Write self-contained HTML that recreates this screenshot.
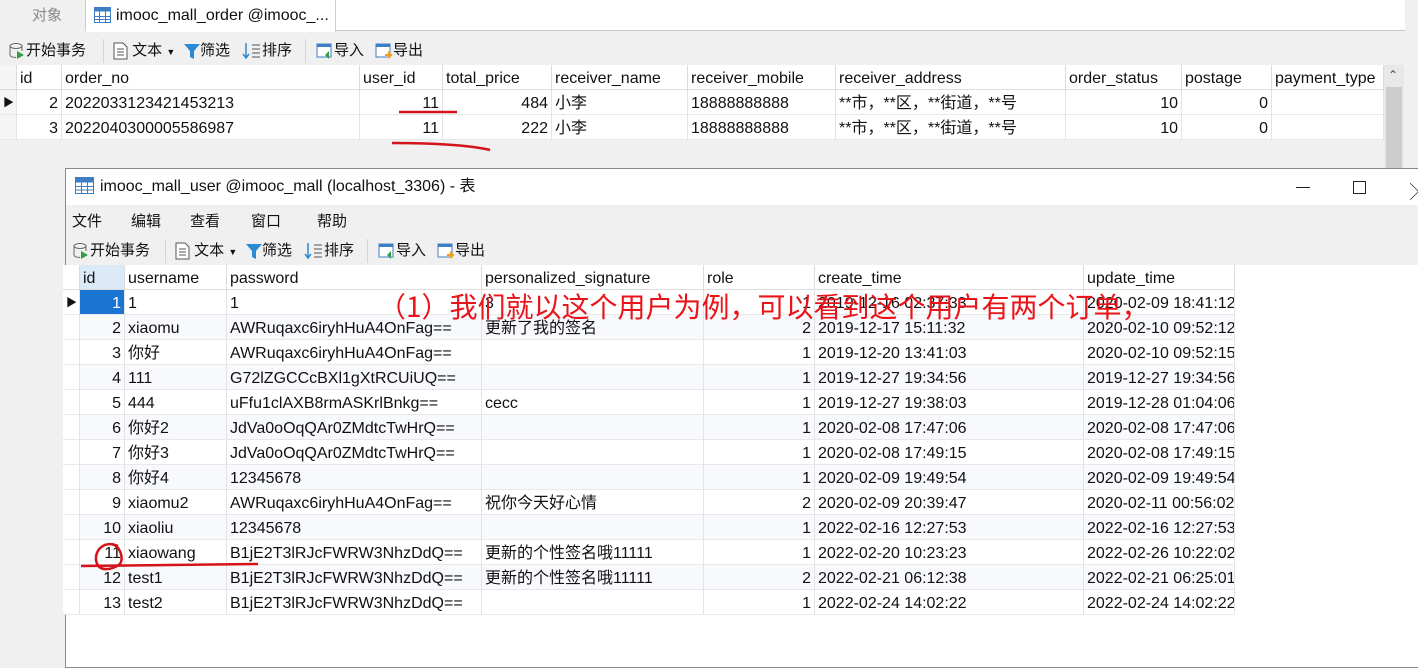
<!DOCTYPE html>
<html><head><meta charset="utf-8"><style>
*{margin:0;padding:0;box-sizing:border-box}
body{width:1418px;height:659px;position:relative;overflow:hidden;background:#f0f0f0;font-family:"Liberation Sans","Noto Sans CJK SC",sans-serif;font-size:15px;color:#111}
.a{position:absolute;white-space:nowrap}
.cell{position:absolute;height:25px;line-height:27px;padding:0 3px;overflow:hidden;white-space:nowrap;border-right:1px solid #e3e3e3;border-bottom:1px solid #e8e8e8;font-size:16px}
.r{text-align:right}
.hd{background:#fff;border-right:1px solid #ddd;border-bottom:1px solid #ddd}
.ic{display:inline-block;vertical-align:middle}
</style></head><body>
<div class="a" style="left:0;top:0;width:1405px;height:31px;background:#fff;border-bottom:1px solid #c8c8c8"></div>
<div class="a" style="left:0;top:0;width:86px;height:31px;background:#f0f0f0;border-right:1px solid #ccc;color:#888;line-height:31px;padding-left:32px">对象</div>
<div class="a" style="left:86px;top:0;width:250px;height:32px;background:#fff;border-right:1px solid #ccc;line-height:31px;padding-left:30px;font-size:16px">imooc_mall_order @imooc_...</div>
<svg class="a" style="left:94px;top:7px" width="17" height="16"><rect x="0.5" y="0.5" width="16" height="15" fill="#fff" stroke="#3c7fc4"/><rect x="0.5" y="0.5" width="16" height="4" fill="#3c7fc4"/><path d="M0 9.5H17M0 12.5H17M5.5 4V16M11.5 4V16" stroke="#3c7fc4"/></svg>
<div class="a" style="left:1405px;top:0;width:13px;height:170px;background:#f0f0f0"></div>
<div class="a" style="left:8px;top:40px;line-height:22px;font-size:15px">
<svg class="ic" width="18" height="18"><ellipse cx="8" cy="4" rx="6" ry="2.5" fill="none" stroke="#666"/><path d="M2 4v9c0 1.5 3 2.5 6 2.5M14 4v5" stroke="#666" fill="none"/><path d="M9 9l7 4-7 4z" fill="#2ea043"/></svg>开始事务</div>
<div class="a" style="left:103px;top:39px;width:1px;height:24px;background:#d5d5d5"></div>
<div class="a" style="left:113px;top:40px;line-height:22px">
<svg class="ic" width="15" height="18"><path d="M1 1h9l4 4v12H1z" fill="#fff" stroke="#555"/><path d="M4 7h7M4 10h7M4 13h7" stroke="#555"/></svg> 文本 <span style="font-size:9px">▼</span></div>
<div class="a" style="left:184px;top:40px;line-height:22px"><svg class="ic" width="16" height="18"><path d="M0 2h16l-6 7v8l-4-2V9z" fill="#2a8ad4"/></svg>筛选</div>
<div class="a" style="left:242px;top:40px;line-height:22px"><svg class="ic" width="20" height="18"><path d="M4 1v15M1 12l3 4 3-4" stroke="#2a8ad4" fill="none" stroke-width="1.5"/><path d="M10 3h8M10 7h8M10 11h8M10 15h8" stroke="#555"/></svg>排序</div>
<div class="a" style="left:305px;top:39px;width:1px;height:24px;background:#d5d5d5"></div>
<div class="a" style="left:316px;top:40px;line-height:22px"><svg class="ic" width="18" height="18"><rect x="1" y="2" width="14" height="13" fill="#fff" stroke="#3c7fc4"/><rect x="1" y="2" width="14" height="3" fill="#3c7fc4"/><path d="M9 13l4-4v8z" fill="#2ea043"/></svg>导入</div>
<div class="a" style="left:375px;top:40px;line-height:22px"><svg class="ic" width="18" height="18"><rect x="1" y="2" width="14" height="13" fill="#fff" stroke="#3c7fc4"/><rect x="1" y="2" width="14" height="3" fill="#3c7fc4"/><path d="M10 13h6M13 10l3 3-3 3" stroke="#f29b1d" fill="none" stroke-width="2"/></svg>导出</div>
<div class="a" style="left:0;top:65px;width:1384px;height:103px;background:#f0f0f0"></div>
<div class="a" style="left:1384px;top:65px;width:20px;height:103px;background:#e8e8e8"></div>
<div class="a" style="left:1386px;top:87px;width:16px;height:81px;background:#cdcdcd"></div>
<div class="a" style="left:1388px;top:68px;font-size:12px;color:#444">⌃</div>
<div id="g1"></div>
<div class="a" style="left:65px;top:168px;width:1360px;height:500px;background:#fff;border:1px solid #888"></div>
<svg class="a" style="left:75px;top:177px" width="19" height="17"><rect x="0.5" y="0.5" width="18" height="16" fill="#fff" stroke="#3c7fc4"/><rect x="0.5" y="0.5" width="18" height="5" fill="#3c7fc4"/><path d="M0 9.5H19M0 13H19M6.5 5V17M12.5 5V17" stroke="#3c7fc4"/></svg>
<div class="a" style="left:100px;top:176px;font-size:16px;line-height:22px">imooc_mall_user @imooc_mall (localhost_3306) - 表</div>
<div class="a" style="left:1296px;top:187px;width:14px;height:1px;background:#222"></div>
<div class="a" style="left:1353px;top:181px;width:13px;height:13px;border:1px solid #222"></div>
<div class="a" style="left:1410px;top:178px;font-size:17px;color:#222">╳</div>
<div class="a" style="left:66px;top:205px;width:1352px;height:60px;background:#f0f0f0"></div>
<div class="a" style="left:72px;top:211px;line-height:22px">文件</div>
<div class="a" style="left:131px;top:211px;line-height:22px">编辑</div>
<div class="a" style="left:190px;top:211px;line-height:22px">查看</div>
<div class="a" style="left:251px;top:211px;line-height:22px">窗口</div>
<div class="a" style="left:317px;top:211px;line-height:22px">帮助</div>
<div class="a" style="left:72px;top:240px;line-height:22px"><svg class="ic" width="18" height="18"><ellipse cx="8" cy="4" rx="6" ry="2.5" fill="none" stroke="#666"/><path d="M2 4v9c0 1.5 3 2.5 6 2.5M14 4v5" stroke="#666" fill="none"/><path d="M9 9l7 4-7 4z" fill="#2ea043"/></svg>开始事务</div>
<div class="a" style="left:165px;top:239px;width:1px;height:24px;background:#d5d5d5"></div>
<div class="a" style="left:175px;top:240px;line-height:22px"><svg class="ic" width="15" height="18"><path d="M1 1h9l4 4v12H1z" fill="#fff" stroke="#555"/><path d="M4 7h7M4 10h7M4 13h7" stroke="#555"/></svg> 文本 <span style="font-size:9px">▼</span></div>
<div class="a" style="left:246px;top:240px;line-height:22px"><svg class="ic" width="16" height="18"><path d="M0 2h16l-6 7v8l-4-2V9z" fill="#2a8ad4"/></svg>筛选</div>
<div class="a" style="left:304px;top:240px;line-height:22px"><svg class="ic" width="20" height="18"><path d="M4 1v15M1 12l3 4 3-4" stroke="#2a8ad4" fill="none" stroke-width="1.5"/><path d="M10 3h8M10 7h8M10 11h8M10 15h8" stroke="#555"/></svg>排序</div>
<div class="a" style="left:367px;top:239px;width:1px;height:24px;background:#d5d5d5"></div>
<div class="a" style="left:378px;top:240px;line-height:22px"><svg class="ic" width="18" height="18"><rect x="1" y="2" width="14" height="13" fill="#fff" stroke="#3c7fc4"/><rect x="1" y="2" width="14" height="3" fill="#3c7fc4"/><path d="M9 13l4-4v8z" fill="#2ea043"/></svg>导入</div>
<div class="a" style="left:437px;top:240px;line-height:22px"><svg class="ic" width="18" height="18"><rect x="1" y="2" width="14" height="13" fill="#fff" stroke="#3c7fc4"/><rect x="1" y="2" width="14" height="3" fill="#3c7fc4"/><path d="M10 13h6M13 10l3 3-3 3" stroke="#f29b1d" fill="none" stroke-width="2"/></svg>导出</div>
<div id="g2"></div>
<div class="a" style="left:378px;top:288px;font-size:28px;line-height:36px;color:#e8141a;font-family:'Noto Sans CJK SC',sans-serif">（1）我们就以这个用户为例，可以看到这个用户有两个订单，</div>
<svg class="a" style="left:0;top:0" width="1418" height="659">
<path d="M399 112L457 112" stroke="#d4141a" stroke-width="2.5" fill="none"/>
<path d="M392 143C430 143 470 145 490 150" stroke="#d4141a" stroke-width="2.5" fill="none"/>
<path d="M81 566L258 564" stroke="#d4141a" stroke-width="2.5" fill="none"/>
<path d="M118 546C104 540 95 550 96 560C98 573 112 570 120 564C124 558 120 546 112 544" stroke="#d4141a" stroke-width="2.5" fill="none"/>
</svg>
<script>
function grid(id,x0,y0,cols,rows,hl,ind){
 let h='';let x=x0;
 h+=`<div class="cell hd" style="left:${x0-17}px;top:${y0}px;width:17px;background:${ind}"></div>`;
 cols.forEach((c,i)=>{h+=`<div class="cell hd" style="left:${x}px;top:${y0}px;width:${c[1]}px;${i==0&&hl?'background:#dce9f7':''}">${c[0]}</div>`;x+=c[1];});
 rows.forEach((r,j)=>{let y=y0+25*(j+1);x=x0;let bg=(hl&&j%2)?'#f7f9fc':'#fff';
  h+=`<div class="cell" style="left:${x0-17}px;top:${y}px;width:17px;background:${ind};font-size:11px">${j==0?'▶':''}</div>`;
  cols.forEach((c,i)=>{let v=r[i];let right=c[2];let sel=(j==0&&i==0&&hl);
   h+=`<div class="cell${right?' r':''}" style="left:${x}px;top:${y}px;width:${c[1]}px;background:${sel?'#1a74d2':bg};${sel?'color:#fff':''}">${v}</div>`;x+=c[1];});
 });
 document.getElementById(id).innerHTML=h;
}
grid('g1',17,65,[['id',45,1],['order_no',298],['user_id',83,1],['total_price',109,1],['receiver_name',136],['receiver_mobile',148],['receiver_address',230],['order_status',116,1],['postage',90,1],['payment_type',112]],
[['2','2022033123421453213','11','484','小李','18888888888','**市，**区，**街道，**号','10','0',''],
 ['3','2022040300005586987','11','222','小李','18888888888','**市，**区，**街道，**号','10','0','']],false,'#f5f5f5');
grid('g2',80,265,[['id',45,1],['username',102],['password',255],['personalized_signature',222],['role',111,1],['create_time',269],['update_time',151]],
[['1','1','1','3','1','2019-12-16 02:37:33','2020-02-09 18:41:12'],
['2','xiaomu','AWRuqaxc6iryhHuA4OnFag==','更新了我的签名','2','2019-12-17 15:11:32','2020-02-10 09:52:12'],
['3','你好','AWRuqaxc6iryhHuA4OnFag==','','1','2019-12-20 13:41:03','2020-02-10 09:52:15'],
['4','111','G72lZGCCcBXl1gXtRCUiUQ==','','1','2019-12-27 19:34:56','2019-12-27 19:34:56'],
['5','444','uFfu1clAXB8rmASKrlBnkg==','cecc','1','2019-12-27 19:38:03','2019-12-28 01:04:06'],
['6','你好2','JdVa0oOqQAr0ZMdtcTwHrQ==','','1','2020-02-08 17:47:06','2020-02-08 17:47:06'],
['7','你好3','JdVa0oOqQAr0ZMdtcTwHrQ==','','1','2020-02-08 17:49:15','2020-02-08 17:49:15'],
['8','你好4','12345678','','1','2020-02-09 19:49:54','2020-02-09 19:49:54'],
['9','xiaomu2','AWRuqaxc6iryhHuA4OnFag==','祝你今天好心情','2','2020-02-09 20:39:47','2020-02-11 00:56:02'],
['10','xiaoliu','12345678','','1','2022-02-16 12:27:53','2022-02-16 12:27:53'],
['11','xiaowang','B1jE2T3lRJcFWRW3NhzDdQ==','更新的个性签名哦11111','1','2022-02-20 10:23:23','2022-02-26 10:22:02'],
['12','test1','B1jE2T3lRJcFWRW3NhzDdQ==','更新的个性签名哦11111','2','2022-02-21 06:12:38','2022-02-21 06:25:01'],
['13','test2','B1jE2T3lRJcFWRW3NhzDdQ==','','1','2022-02-24 14:02:22','2022-02-24 14:02:22']],true,'#fff');
</script>
</body></html>
